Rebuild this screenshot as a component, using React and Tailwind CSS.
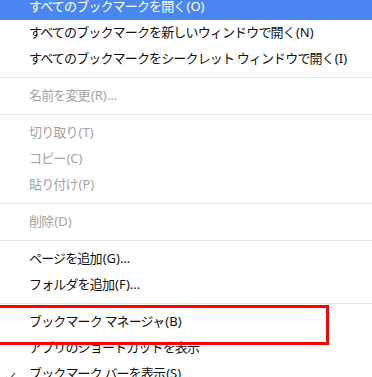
import React from "react";

const font = { fontFamily: '"Noto Sans", "Noto Sans CJK JP", sans-serif' };

function Label({ text }) {
  const parts = text.split(/(\([A-Z]\)(?:\.\.\.)?)/);
  return (
    <>
      {parts.map((p, i) =>
        /^\(/.test(p) ? (
          <span key={i} className="tracking-[0px] ml-[1px]">
            {p}
          </span>
        ) : (
          <span key={i}>{p}</span>
        )
      )}
    </>
  );
}

function Row({ text, disabled, active, check }) {
  return (
    <div
      className={`relative h-[26px] flex items-center pl-[29px] text-[13px] tracking-[-0.85px] whitespace-nowrap ${
        active ? "bg-[#4a86f0] text-white" : disabled ? "text-[#a3a3a3]" : "text-[#111]"
      }`}
    >
      {check && (
        <svg className="absolute left-[5px] top-[11px]" width="11" height="9" viewBox="0 0 11 9">
          <path d="M1 5 L4 8 L10 1" fill="none" stroke="#777" strokeWidth="1.6" />
        </svg>
      )}
      <Label text={text} />
    </div>
  );
}

function Sep() {
  return (
    <div className="py-[5px]">
      <div className="h-px bg-[#e8e8e8]" />
    </div>
  );
}

export default function App() {
  return (
    <div className="relative w-[372px] h-[377px] overflow-hidden bg-white" style={font}>
      <div className="mt-[-6px]">
        <Row active text="すべてのブックマークを開く(O)" />
        <Row text="すべてのブックマークを新しいウィンドウで開く(N)" />
        <Row text="すべてのブックマークをシークレット ウィンドウで開く(I)" />
        <Sep />
        <Row disabled text="名前を変更(R)..." />
        <Sep />
        <Row disabled text="切り取り(T)" />
        <Row disabled text="コピー(C)" />
        <Row disabled text="貼り付け(P)" />
        <Sep />
        <Row disabled text="削除(D)" />
        <Sep />
        <Row text="ページを追加(G)..." />
        <Row text="フォルダを追加(F)..." />
        <Sep />
        <Row text="ブックマーク マネージャ(B)" />
        <Row text="アプリのショートカットを表示" />
        <Row check text="ブックマーク バーを表示(S)" />
      </div>
      <div className="absolute left-[-10px] top-[305px] w-[339px] h-[40px] border-[3px] border-[#ff0000]" />
    </div>
  );
}
